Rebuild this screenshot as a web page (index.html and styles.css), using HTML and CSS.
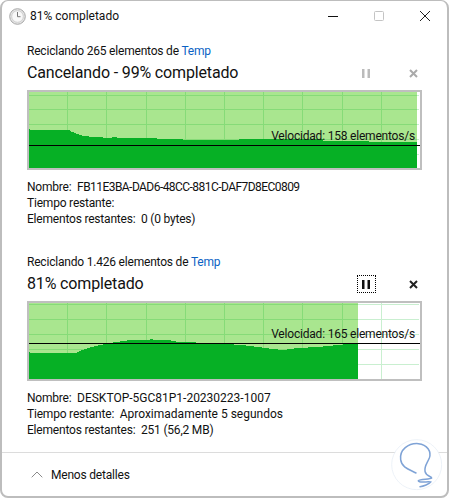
FILE: index.html
```html
<!DOCTYPE html>
<html lang="es">
<head>
    <meta charset="UTF-8">
    <meta name="viewport" content="width=device-width, initial-scale=1.0">
    <title>81% completado</title>
    <link rel="stylesheet" href="styles.css">
</head>
<body>

    <div class="window">
        <div class="titlebar">
            <svg class="clock" width="17" height="17" viewBox="0 0 17 17">
                <circle cx="8.5" cy="8.5" r="7.8" fill="#e4e4e4" stroke="#a8a8a8"/>
                <circle cx="8.5" cy="8.5" r="5.8" fill="#f8f8f8" stroke="#d0d0d0"/>
                <path d="M8.5 4v4.7h3" fill="none" stroke="#777" stroke-width="1"/>
            </svg>
            <span class="title">81% completado</span>
            <div class="win-buttons">
                <svg width="12" height="12" viewBox="0 0 12 12"><path d="M1 6.5h10" stroke="#111" stroke-width="1"/></svg>
                <svg width="12" height="12" viewBox="0 0 12 12"><rect x="1.5" y="1.5" width="9" height="9" rx="1" fill="none" stroke="#c4c4c4"/></svg>
                <svg width="12" height="12" viewBox="0 0 12 12"><path d="M1 1l10 10M11 1L1 11" stroke="#222" stroke-width="1"/></svg>
            </div>
        </div>

        <div class="transfer">
            <p class="line">Reciclando 265 elementos de <a href="#">Temp</a></p>
            <div class="heading-row">
                <h2>Cancelando - 99% completado</h2>
                <div class="controls disabled">
                    <span class="ctl-pause">
                        <svg width="9" height="9" viewBox="0 0 9 9"><path d="M0 0h2.5v9H0zM5.5 0H8v9H5.5z"/></svg>
                    </span>
                    <span class="ctl-close">
                        <svg width="9" height="9" viewBox="0 0 9 9"><path d="M1 1l7 7M8 1L1 8" fill="none" stroke-width="2"/></svg>
                    </span>
                </div>
            </div>
            <div class="chart">
                <svg width="391" height="76" viewBox="29 92 391 76">
                    <rect x="29" y="92" width="388" height="76" fill="#a9e68f"/>
                    <path class="grid" d="M67.5 92v76M106.5 92v76M146.5 92v76M185.5 92v76M224.5 92v76M263.5 92v76M302.5 92v76M342.5 92v76M381.5 92v76M29 95.5h390M29 109.5h390M29 124.5h390M29 139.5h390M29 154.5h390"/>
                    <polygon class="area" points="29,129 31,130 69,130 72,132 75,133 80,135 83,136 95,137 110,138 114,137 120,138 156,138 157,139 182,139 183,140 239,140 239,139 323,139 323,141 335,141 402,142 417,142 417,168 29,168"/>
                    <path class="level" d="M29 145.5h391"/>
                </svg>
                <span class="speed speed-first">Velocidad: 158 elementos/s</span>
            </div>
            <div class="details">
                <p class="line">Nombre:&nbsp; <span class="hex">FB11E3BA-DAD6-48CC-881C-DAF7D8EC0809</span></p>
                <p class="line">Tiempo restante:</p>
                <p class="line">Elementos restantes:&nbsp; 0 (0 bytes)</p>
            </div>
        </div>

        <div class="transfer">
            <p class="line">Reciclando 1.426 elementos de <a href="#">Temp</a></p>
            <div class="heading-row">
                <h2>81% completado</h2>
                <div class="controls">
                    <span class="ctl-pause focused">
                        <svg width="9" height="9" viewBox="0 0 9 9"><path d="M0 0h2.5v9H0zM5.5 0H8v9H5.5z"/></svg>
                    </span>
                    <span class="ctl-close">
                        <svg width="9" height="9" viewBox="0 0 9 9"><path d="M1 1l7 7M8 1L1 8" fill="none" stroke-width="2"/></svg>
                    </span>
                </div>
            </div>
            <div class="chart">
                <svg width="391" height="76" viewBox="29 303 391 76">
                    <rect x="29" y="303" width="329" height="76" fill="#a9e68f"/>
                    <path class="grid" d="M67.5 303v76M106.5 303v76M146.5 303v76M185.5 303v76M224.5 303v76M263.5 303v76M302.5 303v76M342.5 303v76M381.5 303v76M29 304.5h390M29 319.5h390M29 334.5h390M29 349.5h390M29 364.5h390"/>
                    <polygon class="area" points="29,352 31,353 76,353 82,350 88,348 96,346 105,344 115,342 125,341 128,340 148,340 151,339 155,340 168,340 178,342 186,342 225,344 242,345 258,347 272,349 283,350 298,348 318,347 338,345 358,343 358,379 29,379"/>
                    <path class="level" d="M29 343.5h391"/>
                </svg>
                <span class="speed speed-second">Velocidad: 165 elementos/s</span>
            </div>
            <div class="details">
                <p class="line">Nombre:&nbsp; <span class="flat">DESKTOP-5GC81P1-20230223-1007</span></p>
                <p class="line">Tiempo restante:&nbsp; <span class="flat">Aproximadamente 5 segundos</span></p>
                <p class="line">Elementos restantes:&nbsp; 251 (56,2 MB)</p>
            </div>
        </div>

        <div class="footer">
            <svg width="12" height="7" viewBox="0 0 12 7"><path d="M0.7 6.3L6 1l5.3 5.3" fill="none" stroke="#8a8a8a" stroke-width="1"/></svg>
            <span>Menos detalles</span>
        </div>

        <svg class="watermark" width="54" height="54" viewBox="150 60 162 162">
            <circle cx="230" cy="140" r="75" fill="#fff" stroke="#e4ebf5" stroke-width="2"/>
            <path d="M228 165C210 155 185 150 182 125C178 95 205 75 235 77C262 80 275 100 268 120C262 135 252 145 255 160C258 175 275 175 275 180C270 185 240 182 235 188C235 195 265 190 272 192C268 198 250 205 240 206" fill="none" stroke="#7fa3d6" stroke-width="4.5" stroke-linecap="round"/>
        </svg>
    </div>

</body>
</html>
```

FILE: styles.css
```css
body {
    margin: 0;
    background-color: #fff;
    color: #111;
    font-family: Roboto, Arial, sans-serif;
    font-size: 12px;
    letter-spacing: -0.2px;
}

.window {
    position: relative;
    display: flex;
    flex-direction: column;
    box-sizing: border-box;
    width: 449px;
    height: 498px;
    background-color: #fff;
    border: 2px solid #bdbdbd;
    border-top-width: 1px;
    border-radius: 8px;
}

.titlebar {
    display: flex;
    align-items: center;
    height: 30px;
    padding-left: 7px;
    flex-shrink: 0;
}

.clock {
    margin-right: 4px;
}

.title {
    letter-spacing: 0;
}

.win-buttons {
    display: flex;
    gap: 34px;
    margin-left: auto;
    margin-right: 16px;
}

.transfer {
    padding: 0 25px;
    margin-top: 12px;
}

.transfer + .transfer {
    margin-top: 27px;
}

.line {
    margin: 0;
    height: 16px;
    line-height: 16px;
    white-space: nowrap;
}

.hex {
    letter-spacing: -0.55px;
}

.flat {
    letter-spacing: 0;
}

a {
    color: #0b62c4;
    text-decoration: none;
}

.heading-row {
    display: flex;
    align-items: center;
    justify-content: space-between;
    height: 24px;
    margin-top: 1px;
}

h2 {
    margin: 0;
    font-size: 16px;
    font-weight: normal;
    letter-spacing: -0.15px;
}

.controls {
    display: flex;
    align-items: center;
    gap: 29px;
    margin-right: 1px;
    margin-top: 2px;
}

.ctl-pause, .ctl-close {
    display: flex;
    align-items: center;
    justify-content: center;
    box-sizing: border-box;
    height: 18px;
}

.ctl-pause {
    width: 19px;
}

.ctl-close {
    width: 16px;
}

.ctl-pause svg {
    fill: #111;
}

.ctl-close svg {
    stroke: #222;
}

.focused {
    outline: 1px dotted #000;
    outline-offset: -1px;
}

.disabled .ctl-pause svg {
    fill: #bbb;
}

.disabled .ctl-close svg {
    stroke: #aaa;
}

.chart {
    position: relative;
    box-sizing: border-box;
    height: 80px;
    margin-top: 6px;
    border: 2px solid #bfbfbf;
}

.chart svg {
    display: block;
    shape-rendering: crispEdges;
}

.grid {
    fill: none;
    stroke: rgba(10, 181, 42, 0.22);
}

.area {
    fill: #06b025;
}

.level {
    stroke: #000;
    fill: none;
}

.speed {
    position: absolute;
    right: 5px;
    line-height: 16px;
    white-space: nowrap;
}

.speed-first {
    top: 36px;
}

.speed-second {
    top: 23px;
}

.details {
    margin-top: 9px;
}

.footer {
    display: flex;
    align-items: center;
    gap: 8px;
    height: 43px;
    margin-top: auto;
    padding-left: 29px;
    border-top: 1px solid #dcdcdc;
}

.watermark {
    position: absolute;
    right: 3px;
    bottom: 4px;
}
```
